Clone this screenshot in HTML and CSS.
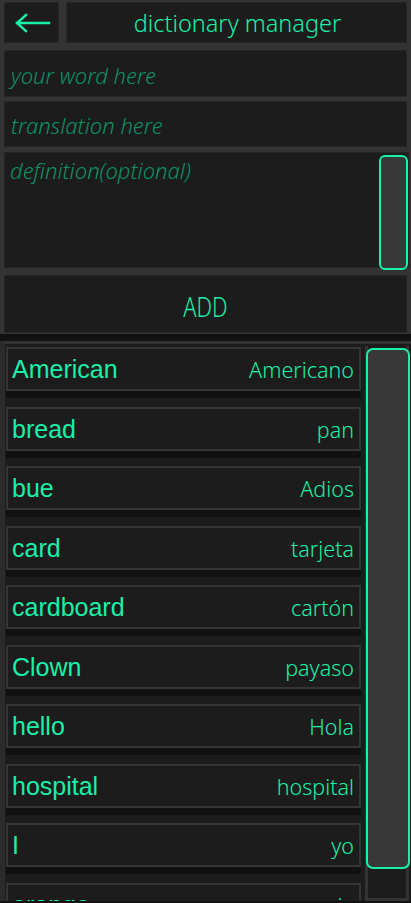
FILE: index.html
```html
<!DOCTYPE html>
<html>
<head>
<meta charset="utf-8">
<link rel="stylesheet" href="styles.css">
</head>
<body>
<div class="top">
  <div class="header">
    <div class="box back">
      <svg width="36" height="20" viewBox="0 0 36 20"><path d="M2 10 H34 M11 2 L2 10 L11 18" fill="none" stroke="#19f0a8" stroke-width="2.4" stroke-linecap="square"/></svg>
    </div>
    <div class="box title">dictionary manager</div>
  </div>
  <div class="box field"><span class="ph">your word here</span></div>
  <div class="box field f2"><span class="ph">translation here</span></div>
  <div class="box area">
    <span class="ph">definition(optional)</span>
    <div class="athumb"></div>
  </div>
  <div class="box add"><span class="addtxt">ADD</span></div>
</div>
<div class="sep"></div>
<div class="panel">
  <div class="list">
    <div class="item"><span class="w">American</span><span class="t">Americano</span></div>
    <div class="item"><span class="w">bread</span><span class="t">pan</span></div>
    <div class="item"><span class="w">bue</span><span class="t">Adios</span></div>
    <div class="item"><span class="w">card</span><span class="t">tarjeta</span></div>
    <div class="item"><span class="w">cardboard</span><span class="t">cartón</span></div>
    <div class="item"><span class="w">Clown</span><span class="t">payaso</span></div>
    <div class="item"><span class="w">hello</span><span class="t">Hola</span></div>
    <div class="item"><span class="w">hospital</span><span class="t">hospital</span></div>
    <div class="item"><span class="w">I</span><span class="t">yo</span></div>
    <div class="item"><span class="w">orange</span><span class="t">naranja</span></div>
  </div>
  <div class="track"><div class="thumb"></div></div>
</div>
<div class="bottom"></div>
</body>
</html>
```
FILE: styles.css
```css
* { box-sizing: border-box; }
html, body { margin: 0; padding: 0; }
body {
  width: 411px;
  height: 903px;
  overflow: hidden;
  background: #1c1c1c;
  font-family: "Noto Sans", sans-serif;
  color: #19f0a8;
}
.top {
  background: #333333;
  padding: 2px 4px 1px 4px;
  display: flex;
  flex-direction: column;
}
.box {
  background: #1c1c1c;
  border: 1px solid #262626;
}
.header {
  display: flex;
  gap: 7px;
  height: 41px;
  margin-bottom: 7px;
}
.back {
  width: 55px;
  display: flex;
  align-items: center;
  justify-content: center;
  padding-left: 2px;
}
.title {
  flex: 1;
  display: flex;
  align-items: center;
  justify-content: center;
  font-size: 23.5px;
  font-weight: 300;
  padding-top: 1px;
  padding-left: 2px;
}
.field {
  height: 47px;
  margin-bottom: 4px;
  display: flex;
  align-items: center;
  padding-left: 6px;
  padding-top: 2px;
}
.f2 { height: 46px; margin-bottom: 5px; }
.ph {
  font-style: italic;
  font-weight: 300;
  font-size: 22px;
  color: #0f9064;
}
.area {
  height: 116px;
  margin-bottom: 7px;
  display: flex;
  justify-content: space-between;
  align-items: flex-start;
  padding: 2px 0 0 5px;
  margin-right: -2px;
}
.athumb {
  width: 29px;
  height: 115px;
  margin-top: 0;
  background: #383838;
  border: 2px solid #19f0a8;
  border-radius: 6px;
}
.add {
  height: 58px;
  display: flex;
  align-items: center;
  justify-content: center;
  padding-top: 4px;
}
.addtxt {
  display: inline-block;
  font-size: 28px;
  font-weight: 300;
  transform: scaleX(0.78);
}
.sep {
  height: 7px;
  background: #111111;
}
.panel {
  display: flex;
  border-top: 3px solid #333333;
  border-left: 5px solid #2b2b2b;
  height: 560px;
  background: #1c1c1c;
}
.list {
  flex: none;
  width: 356px;
  padding: 3px 0 0 1px;
  overflow: hidden;
}
.item {
  height: 44px;
  margin-bottom: 15.5px;
  background: #1c1c1c;
  border: 2px solid #353535;
  box-shadow: 0 7px 0 #111111;
  display: flex;
  justify-content: space-between;
  align-items: baseline;
  padding: 5px 5px 0 4px;
}
.w {
  font-family: "Liberation Sans", Arial, sans-serif;
  font-size: 25px;
  line-height: 30px;
}
.t {
  font-size: 21.5px;
  font-weight: 300;
  line-height: 30px;
}
.track {
  margin: 2px 0 0 4px;
  width: 44px;
  background: #1c1c1c;
  border: 3px solid #333333;
  border-top: 0;
}
.thumb {
  margin: 2px 0 0 -2px;
  width: 44px;
  height: 521px;
  background: #383838;
  border: 2px solid #19f0a8;
  border-radius: 7px;
}
.bottom {
  height: 3px;
  background: #111111;
}
```
